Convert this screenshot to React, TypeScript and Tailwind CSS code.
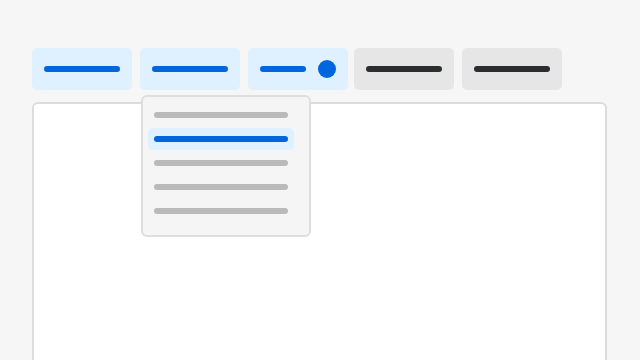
const BLUE_TABS = [
  { bar: "w-[76px]", dot: false },
  { bar: "w-[76px]", dot: false },
  { bar: "w-[46px]", dot: true },
];

const MENU_ITEMS = [false, true, false, false, false];

export default function App() {
  return (
    <div className="h-[360px] w-[640px] overflow-hidden bg-[#f6f6f6] pl-8 pt-12">
      <div className="relative flex h-[42px] items-stretch">
        {BLUE_TABS.map((t, i) => (
          <div
            key={i}
            className={
              "flex w-[100px] items-center justify-between rounded-[5px] bg-[#dff0fe] px-3 " +
              (i < 2 ? "mr-2" : "mr-[6px]")
            }
          >
            <div className={"h-[6px] rounded-full bg-[#0066dd] " + t.bar} />
            {t.dot && <div className="h-[18px] w-[18px] rounded-full bg-[#0066dd]" />}
          </div>
        ))}
        <div className="mr-2 flex w-[100px] items-center rounded-[5px] bg-[#e6e6e6] px-3">
          <div className="h-[6px] w-[76px] rounded-full bg-[#2b2d31]" />
        </div>
        <div className="flex w-[100px] items-center rounded-[5px] bg-[#e6e6e6] px-3">
          <div className="h-[6px] w-[76px] rounded-full bg-[#2b2d31]" />
        </div>

        {/* dropdown under second tab */}
        <div className="absolute left-[109px] top-[47px] z-10 flex h-[142px] w-[170px] flex-col gap-[2px] rounded-[6px] border-2 border-[#dedede] bg-[#f5f5f5] pb-[13px] pl-[5px] pt-[7px]">
          {MENU_ITEMS.map((active, i) => (
            <div
              key={i}
              className={
                "flex h-[22px] w-[146px] items-center rounded-[5px] px-[6px] " +
                (active ? "bg-[#dff0fe]" : "")
              }
            >
              <div
                className={
                  "h-[6px] w-[134px] rounded-full " + (active ? "bg-[#0066dd]" : "bg-[#bababa]")
                }
              />
            </div>
          ))}
        </div>
      </div>

      <div className="mt-3 h-[300px] w-[575px] rounded-[6px] border-2 border-[#dcdcdc] bg-white" />
    </div>
  );
}
